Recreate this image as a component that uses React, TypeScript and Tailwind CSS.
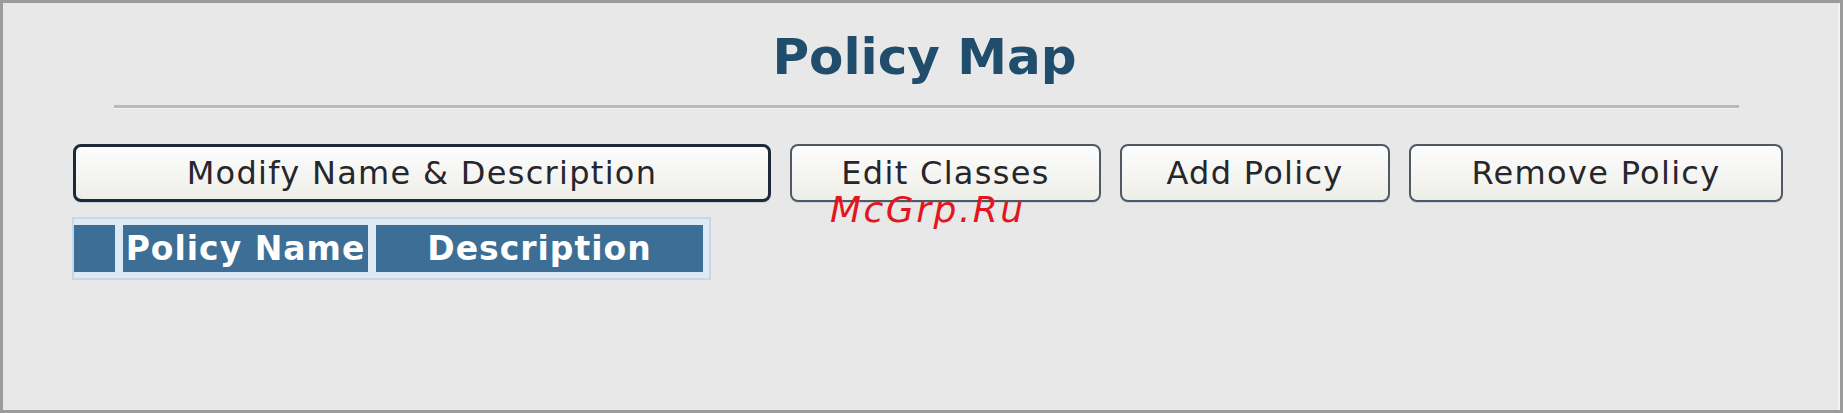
const buttons = [
  { label: "Modify Name & Description", width: "w-[698px]", focused: true },
  { label: "Edit Classes", width: "w-[311px]", focused: false },
  { label: "Add Policy", width: "w-[270px]", focused: false },
  { label: "Remove Policy", width: "w-[374px]", focused: false },
];

function ActionButton({ label, width, focused }: { label: string; width: string; focused: boolean }) {
  const border = focused
    ? "border-[3px] border-[#1d2838]"
    : "border-2 border-[#4f5963]";
  return (
    <button
      type="button"
      className={`${width} h-[58px] rounded-[8px] ${border} bg-gradient-to-b from-[#fdfdfe] to-[#eeeee8] text-[32px] leading-none tracking-[1.3px] text-[#26262b] shadow-[0_1px_0_#c9d3dc]`}
    >
      {label}
    </button>
  );
}

export default function App() {
  return (
    <div
      className="relative h-[413px] w-[1843px] border-[3px] border-[#9b9b9b] bg-[#e8e8e8]"
      style={{ fontFamily: '"DejaVu Sans", Verdana, sans-serif' }}
    >
      <div className="flex h-full flex-col border-r-2 border-[#f3f3f3]">
        <h1 className="mt-[29px] pl-[8px] text-center text-[50px] font-bold leading-[50px] text-[#214d6c]">
          Policy Map
        </h1>

        <div className="ml-[111px] mt-[23px] w-[1625px] border-t-[3px] border-b border-t-[#b9b9b5] border-b-[#f4f4f2]" />

        <div className="ml-[70px] mt-[35px] flex items-center gap-[19px]">
          {buttons.map((b) => (
            <ActionButton key={b.label} {...b} />
          ))}
        </div>

        <div className="ml-[69px] mt-[15px] flex w-fit gap-[8px] border-2 border-[#c4d8e9] bg-[#dde9f3] py-[6px] pr-[6px] text-[33px] font-bold leading-none tracking-[1px] text-white">
          <div className="h-[47px] w-[41px] bg-[#3d6f96]" />
          <div className="flex h-[47px] w-[245px] items-center justify-center bg-[#3d6f96]">Policy Name</div>
          <div className="flex h-[47px] w-[327px] items-center justify-center bg-[#3d6f96]">Description</div>
        </div>
      </div>

      <div className="absolute left-[827px] top-[189px] text-[36px] italic leading-[36px] tracking-[2.5px] text-[#e3161e]">
        McGrp.Ru
      </div>
    </div>
  );
}
